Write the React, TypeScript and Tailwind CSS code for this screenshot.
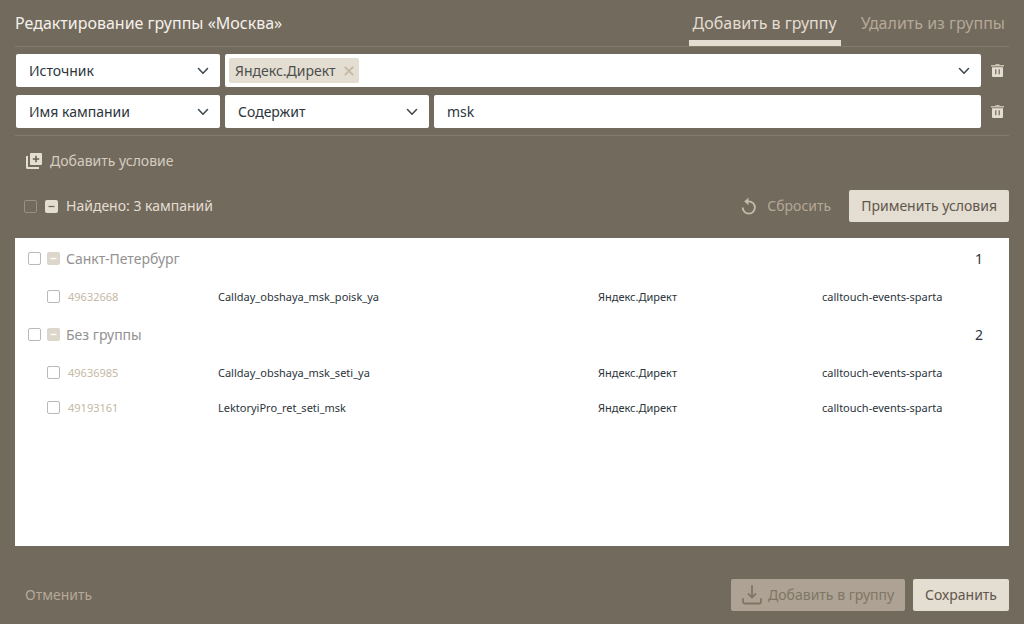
import React, { useState } from 'react';

interface Campaign {
  id: string;
  name: string;
  source: string;
  account: string;
}

interface CampaignGroup {
  title: string;
  campaigns: Campaign[];
}

const GROUPS: CampaignGroup[] = [
  {
    title: 'Санкт-Петербург',
    campaigns: [
      { id: '49632668', name: 'Callday_obshaya_msk_poisk_ya', source: 'Яндекс.Директ', account: 'calltouch-events-sparta' },
    ],
  },
  {
    title: 'Без группы',
    campaigns: [
      { id: '49636985', name: 'Callday_obshaya_msk_seti_ya', source: 'Яндекс.Директ', account: 'calltouch-events-sparta' },
      { id: '49193161', name: 'LektoryiPro_ret_seti_msk', source: 'Яндекс.Директ', account: 'calltouch-events-sparta' },
    ],
  },
];

const ChevronIcon = () => (
  <svg viewBox="0 0 12 8" className="w-3 h-2" fill="none" stroke="#414a50" strokeWidth="1.6" strokeLinecap="round" strokeLinejoin="round">
    <path d="M1.5 1.5 6 6.2l4.500-4.700" />
  </svg>
);

const TrashIcon = () => (
  <svg viewBox="0 0 13 13" className="w-[13px] h-[13px]">
    <path fill="#c9c0b1" d="M4.500 0h4v1H13v1.600H0V1h4.500z" />
    <path fill="#e4ddd1" fillRule="evenodd" d="M1 3.200h11V12a1 1 0 0 1-1 1H2a1 1 0 0 1-1-1zM4.200 5.200v5h1.200v-5zm3.400 0v5h1.200v-5z" />
  </svg>
);

const AddConditionIcon = () => (
  <svg viewBox="0 0 16 16" className="w-4 h-4">
    <path fill="#e4ddd1" d="M0 3h2v11h11v2H1.500A1.500 1.500 0 0 1 0 14.500z" />
    <rect x="4" width="12" height="12" rx="1" fill="#e4ddd1" />
    <path d="M10 2.800v6.400M6.800 6h6.400" stroke="#665e52" strokeWidth="1.500" />
  </svg>
);

const ResetIcon = () => (
  <svg viewBox="0 0 16 18" className="w-4 h-[18px]" fill="none" stroke="#c5b9a8" strokeWidth="1.900">
    <path d="M1.700 10.500A6.100 6.100 0 1 0 7.800 4.400H4" />
    <path d="M7.500.500v7.800L3.300 4.400z" fill="#c5b9a8" stroke="none" />
  </svg>
);

const DownloadIcon = () => (
  <svg viewBox="0 0 20 20" className="w-5 h-5" fill="none" stroke="currentColor" strokeWidth="1.800" strokeLinecap="round" strokeLinejoin="round">
    <path d="M10 1v11M6.500 9l3.500 3.500L13.500 9M1 14v3a1.500 1.500 0 0 0 1.500 1.500h15A1.500 1.500 0 0 0 19 17v-3" />
  </svg>
);

const CollapseIcon = ({ className }: { className: string }) => (
  <svg viewBox="0 0 13 13" className={className}>
    <rect width="13" height="13" rx="2" fill="currentColor" />
    <path d="M3.500 6.500h6" stroke="var(--dash)" strokeWidth="1.300" />
  </svg>
);

const DeleteButton = () => (
  <button type="button" aria-label="Удалить условие" className="w-7 flex items-center justify-center pl-1 cursor-pointer">
    <TrashIcon />
  </button>
);

const SelectField = ({ label, options }: { label: string; options: string[] }) => (
  <div className="relative w-[204px] shrink-0">
    <select aria-label={label} className="w-full h-[33px] appearance-none rounded-xs bg-white pl-[13px] pr-8 text-[#2c353b] cursor-pointer">
      {options.map((option) => <option key={option}>{option}</option>)}
    </select>
    <span className="absolute right-[11px] inset-y-0 flex items-center pointer-events-none"><ChevronIcon /></span>
  </div>
);

const CheckBox = ({ label, className }: { label: string; className: string }) => (
  <input
    type="checkbox"
    aria-label={label}
    className={`appearance-none w-[13px] h-[13px] shrink-0 rounded-xs border checked:bg-[#aa9f8f] ${className}`}
  />
);

const App: React.FC = () => {
  const [activeTab, setActiveTab] = useState<'add' | 'remove'>('add');
  const [sources, setSources] = useState(['Яндекс.Директ']);
  const [value, setValue] = useState('msk');
  const [collapsed, setCollapsed] = useState<string[]>([]);

  const toggleGroup = (title: string) => {
    setCollapsed(collapsed.includes(title) ? collapsed.filter((t) => t !== title) : [...collapsed, title]);
  };

  const tabClass = (tab: 'add' | 'remove') =>
    activeTab === tab
      ? 'px-1 pt-[6px] border-b-[6px] border-[#e4ddd1] text-[#e4ddd1] cursor-pointer'
      : 'px-1 pt-[6px] border-b-[6px] border-transparent text-[#b5a898] cursor-pointer';

  return (
    <div className="min-h-screen flex flex-col bg-[#726a5d] px-[15px] font-['Noto_Sans',sans-serif] text-[14px] leading-5">
      <header className="h-[47px] flex justify-between border-b border-[#857b6b] text-[16px]">
        <h1 className="self-center text-[#f5f1ea]">Редактирование группы «Москва»</h1>
        <nav className="flex gap-4">
          <button type="button" onClick={() => setActiveTab('add')} className={tabClass('add')}>Добавить в группу</button>
          <button type="button" onClick={() => setActiveTab('remove')} className={tabClass('remove')}>Удалить из группы</button>
        </nav>
      </header>

      <section className="flex flex-col gap-2 py-[7px] pl-px border-b border-[#857b6b]">
        <div className="flex">
          <div className="flex grow gap-[5px]">
            <SelectField label="Параметр" options={['Источник', 'Имя кампании']} />
            <div className="grow h-[33px] flex items-center justify-between rounded-xs bg-white pl-1 pr-[11px]">
              <div className="flex gap-1">
                {sources.map((source) => (
                  <span key={source} className="h-[25px] flex items-center gap-2 rounded-xs bg-[#e4ddd1] pl-[6px] pr-[5px] text-[#4c4f4f]">
                    {source}
                    <button type="button" aria-label="Убрать источник" onClick={() => setSources(sources.filter((s) => s !== source))} className="cursor-pointer">
                      <svg viewBox="0 0 10 10" className="w-[10px] h-[10px]" stroke="#c5b8a5" strokeWidth="1.800">
                        <path d="m.8.8 8.400 8.400M9.200.8.8 9.200" />
                      </svg>
                    </button>
                  </span>
                ))}
              </div>
              <button type="button" aria-label="Открыть список" className="cursor-pointer"><ChevronIcon /></button>
            </div>
          </div>
          <DeleteButton />
        </div>
        <div className="flex">
          <div className="flex grow gap-[5px]">
            <SelectField label="Параметр" options={['Имя кампании', 'Источник']} />
            <SelectField label="Условие" options={['Содержит', 'Не содержит']} />
            <input
              type="text"
              aria-label="Значение"
              value={value}
              onChange={(e) => setValue(e.target.value)}
              className="grow min-w-0 h-[33px] rounded-xs bg-white px-[13px] text-[#2c353b]"
            />
          </div>
          <DeleteButton />
        </div>
      </section>

      <div className="h-[49px] flex items-center pl-[11px]">
        <button type="button" className="flex items-center gap-2 text-[#d5cdc0] cursor-pointer">
          <AddConditionIcon />
          Добавить условие
        </button>
      </div>

      <div className="h-[42px] flex items-center justify-between mb-[11px]">
        <div className="flex items-center gap-2 pl-[9px] text-[#e4ddd1]">
          <CheckBox label="Выбрать все" className="border-[#9b9080]" />
          <button type="button" aria-label="Свернуть все" onClick={() => setCollapsed(GROUPS.map((g) => g.title))} className="cursor-pointer">
            <CollapseIcon className="w-[13px] h-[13px] [--dash:#726a5d]" />
          </button>
          <span>Найдено: 3 кампаний</span>
        </div>
        <div className="flex items-center gap-[18px]">
          <button type="button" className="flex items-center gap-[10px] text-[#b5a898] cursor-pointer">
            <ResetIcon />
            Сбросить
          </button>
          <button type="button" className="h-8 px-3 rounded-xs bg-[#e4ddd1] text-[#5f574c] cursor-pointer">Применить условия</button>
        </div>
      </div>

      <main className="grow bg-white">
        <table className="w-full table-fixed text-left text-[11px] text-[#2c353b]">
          <colgroup>
            <col className="w-[203px]" />
            <col />
            <col className="w-[224px]" />
            <col className="w-[187px]" />
          </colgroup>
          {GROUPS.map((group) => (
            <tbody key={group.title}>
              <tr className="h-[41px] text-[14px]">
                <th colSpan={3} scope="rowgroup" className="font-normal text-[#929292]">
                  <div className="flex items-center gap-[6px] pl-[13px]">
                    <CheckBox label={group.title} className="border-[#b9b9b9]" />
                    <button type="button" aria-label="Свернуть группу" onClick={() => toggleGroup(group.title)} className="text-[#ddd6cb] cursor-pointer">
                      <CollapseIcon className="w-[13px] h-[13px] [--dash:#ffffff]" />
                    </button>
                    {group.title}
                  </div>
                </th>
                <td className="pr-[26px] text-right">{group.campaigns.length}</td>
              </tr>
              {!collapsed.includes(group.title) && group.campaigns.map((campaign) => (
                <tr key={campaign.id} className="h-[35px]">
                  <td>
                    <div className="flex items-center gap-2 pl-8 text-[#c5b8a5]">
                      <CheckBox label={campaign.id} className="border-[#b9b9b9]" />
                      {campaign.id}
                    </div>
                  </td>
                  <td>{campaign.name}</td>
                  <td>{campaign.source}</td>
                  <td>{campaign.account}</td>
                </tr>
              ))}
            </tbody>
          ))}
        </table>
      </main>

      <footer className="flex items-center justify-between pt-[33px] pb-[13px]">
        <button type="button" className="pl-[10px] text-[#b5a898] cursor-pointer">Отменить</button>
        <div className="flex gap-2">
          <button type="button" disabled className="h-8 flex items-center gap-[6px] px-[11px] rounded-xs bg-[#ada293] text-[#807667]">
            <DownloadIcon />
            Добавить в группу
          </button>
          <button type="button" className="h-8 px-3 rounded-xs bg-[#e4ddd1] text-[#5f574c] cursor-pointer">Сохранить</button>
        </div>
      </footer>
    </div>
  );
};

export default App;
